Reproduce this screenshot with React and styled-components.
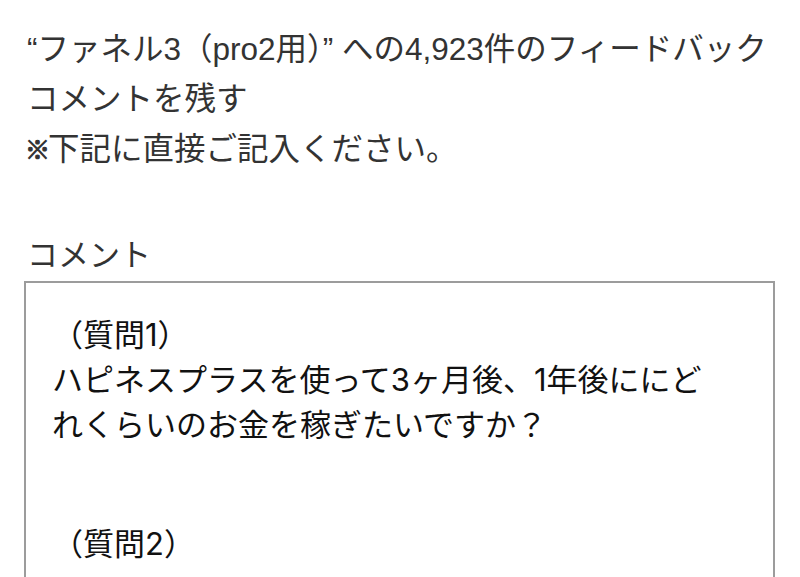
import styled, { createGlobalStyle } from "styled-components";

const GlobalStyle = createGlobalStyle`
  body {
    margin: 0;
    background: #fff;
    font-family: "Liberation Sans", "Noto Sans CJK JP", sans-serif;
  }
`;

const Page = styled.div`
  padding: 24px 26px 0 27px;
  color: #333;
`;

const Intro = styled.p`
  margin: 0;
  font-size: 31.5px;
  line-height: 50px;
`;

const Mark = styled.span`
  display: inline-block;
  width: 23px;
  margin-left: -2px;
  font-size: 25px;
  -webkit-text-stroke: 1px #333;
  vertical-align: 1px;
`;

const Field = styled.label`
  display: block;
  margin-top: 56px;
`;

const FieldName = styled.span`
  display: block;
  font-size: 31px;
  line-height: 50px;
`;

const CommentBox = styled.textarea`
  display: block;
  box-sizing: border-box;
  width: 751px;
  height: 420px;
  margin: 0 0 0 -3px;
  padding: 27px 46px 26px 26px;
  border: 2px solid #9c9c9c;
  border-radius: 0;
  font-family: "Inter", "Noto Sans CJK JP", sans-serif;
  font-size: 31px;
  line-height: normal;
  color: #111;
  background: #fff;
  resize: none;
  outline: none;
`;

const comment = `（質問1）
ハピネスプラスを使って3ヶ月後、1年後ににどれくらいのお金を稼ぎたいですか？


（質問2）
`;

const App = () => {
  return (
    <>
      <GlobalStyle />
      <Page>
        <Intro>“ファネル3（pro2用）” への4,923件のフィードバックコメントを残す</Intro>
        <Intro>
          <Mark>※</Mark>下記に直接ご記入ください。
        </Intro>
        <Field>
          <FieldName>コメント</FieldName>
          <CommentBox defaultValue={comment} />
        </Field>
      </Page>
    </>
  );
};

export default App;
